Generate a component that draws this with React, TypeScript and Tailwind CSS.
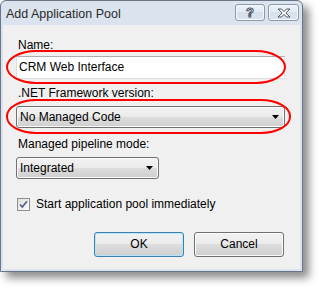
import React from "react";

const font = "font-['Segoe_UI','Liberation_Sans',Arial,sans-serif]";

function Combo({ value, width }: { value: string; width: string }) {
  return (
    <div
      className={`${width} h-[22px] flex items-center justify-between pl-[3px] pr-[5px] rounded-[3px] border border-[#707070] shadow-[inset_0_0_0_1px_#fbfbfb] bg-[linear-gradient(#f2f2f2_0%,#ebebeb_50%,#dddddd_50%,#cfcfcf_100%)] text-black`}
    >
      <span>{value}</span>
      <svg width="7" height="4" viewBox="0 0 7 4">
        <path d="M0 0h7L3.5 4z" fill="#000" />
      </svg>
    </div>
  );
}

function CaptionButton({ children, w }: { children: React.ReactNode; w: string }) {
  return (
    <div
      className={`${w} h-[17px] flex items-center justify-center rounded-[3px] border border-[#8b9ab0] shadow-[inset_0_0_0_1px_#f4f7fb] bg-[linear-gradient(#edf2f8_0%,#e2e9f2_50%,#d6e0ec_50%,#dbe4ef_100%)]`}
    >
      {children}
    </div>
  );
}

function Button({ label, primary }: { label: string; primary?: boolean }) {
  return (
    <div
      className={`w-[90px] h-[25px] flex items-center justify-center rounded-[3px] border bg-[linear-gradient(#f2f2f2_0%,#ebebeb_50%,#dddddd_50%,#cfcfcf_100%)] text-black ${
        primary
          ? "border-[#3c7fb1] shadow-[inset_0_0_0_1px_#b7e6fb]"
          : "border-[#707070] shadow-[inset_0_0_0_1px_#fbfbfb]"
      }`}
    >
      {label}
    </div>
  );
}

export default function App() {
  return (
    <div className={`relative w-[320px] h-[289px] bg-white ${font} text-[12px] leading-[15px]`}>
      <div className="w-[303px] h-[272px] flex flex-col rounded-t-[6px] border border-[#6a7686] bg-[#dae3ee] shadow-[6px_6px_8px_rgba(0,0,0,0.45)]">
        {/* title bar */}
        <div className="h-[24px] flex items-start pl-[5px] pr-[3px] pt-[3px]">
          <span className="mt-[3px] text-[12.5px] text-[#2a2a2a]">Add Application Pool</span>
          <div className="ml-auto flex gap-[3px]">
            <CaptionButton w="w-[30px]">
              <span className="font-bold text-[13px] leading-[13px] text-white [-webkit-text-stroke:1px_#4b5668]">?</span>
            </CaptionButton>
            <CaptionButton w="w-[31px]">
              <svg width="14" height="10" viewBox="0 0 14 10">
                <path
                  d="M1 1h3.5L7 3.6 9.5 1H13L8.8 5 13 9H9.5L7 6.4 4.5 9H1l4.2-4z"
                  fill="#fff"
                  stroke="#4b5668"
                  strokeWidth="1"
                  strokeLinejoin="round"
                />
              </svg>
            </CaptionButton>
          </div>
        </div>

        {/* client area */}
        <div className="flex-1 mx-[2px] mb-[2px] bg-[#f0f0f0] flex flex-col pl-[13px] pr-[15px]">
          <div className="mt-[13px] pl-[2px]">Name:</div>
          <div className="mt-[3px] h-[23px] flex items-center pl-[2px] bg-white border border-[#d9dde4] border-t-[#abadb3] text-black">
            CRM Web Interface
          </div>

          <div className="mt-[7px] pl-[2px]">.NET Framework version:</div>
          <div className="mt-[5px]">
            <Combo value="No Managed Code" width="w-full" />
          </div>

          <div className="mt-[9px] pl-[2px]">Managed pipeline mode:</div>
          <div className="mt-[5px]">
            <Combo value="Integrated" width="w-[143px]" />
          </div>

          <div className="mt-[18px] flex items-center gap-[6px] pl-[1px]">
            <div className="w-[13px] h-[13px] border border-[#8f8f8f] bg-[linear-gradient(135deg,#dedede,#fbfbfb)] flex items-center justify-center">
              <svg width="9" height="9" viewBox="0 0 9 9">
                <path d="M1 4.5l2.3 2.6L8 1.2" fill="none" stroke="#4a5f8a" strokeWidth="1.6" />
              </svg>
            </div>
            <span>Start application pool immediately</span>
          </div>

          <div className="mt-[20px] flex justify-end gap-[10px] pr-[1px]">
            <Button label="OK" primary />
            <Button label="Cancel" />
          </div>
        </div>
      </div>

      {/* red highlight marks */}
      <div className="absolute left-[6px] top-[50px] w-[280px] h-[34px] border-2 border-[#ff0000] rounded-[30px/17px]" />
      <div className="absolute left-[6px] top-[99px] w-[285px] h-[35px] border-2 border-[#ff0000] rounded-[30px/17px]" />
    </div>
  );
}
